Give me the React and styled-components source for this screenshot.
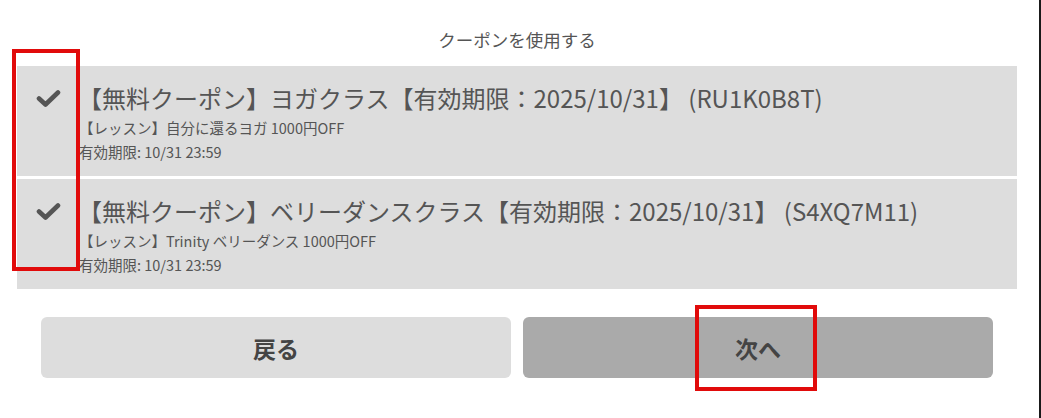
import React from 'react';
import styled, { createGlobalStyle } from 'styled-components';

const GlobalStyle = createGlobalStyle`
  html, body {
    margin: 0;
    padding: 0;
    background: #ffffff;
  }

  body {
    font-family: "Noto Sans CJK JP", "Noto Sans", sans-serif;
    color: #555555;
  }
`;

const Frame = styled.div`
  display: flex;
  width: 1041px;
  height: 418px;
  overflow: hidden;
`;

const Page = styled.div`
  position: relative;
  flex: 1;
  padding: 28px 0 0 17px;
`;

const Edge = styled.div`
  width: 2px;
  background-color: #1a1a1a;
`;

const Panel = styled.div`
  display: flex;
  flex-direction: column;
  width: 1000px;
`;

const Heading = styled.div`
  font-size: 17.5px;
  line-height: 24px;
  text-align: center;
  color: #555555;
  margin-bottom: 14px;
`;

const CouponList = styled.div`
  display: flex;
  flex-direction: column;
  gap: 3px;
`;

const CouponCard = styled.div`
  display: flex;
  background-color: #dddddd;
  height: 110px;
  box-sizing: border-box;
  padding-top: 15px;
`;

const CheckColumn = styled.div`
  display: flex;
  justify-content: center;
  width: 62px;
  padding-top: 9px;
  box-sizing: border-box;
`;

const CouponBody = styled.div`
  display: flex;
  flex-direction: column;
`;

const CouponTitle = styled.div`
  font-size: 24px;
  line-height: 34px;
  color: #555555;
  white-space: nowrap;
  margin-left: -1px;
`;

const CouponLine = styled.div`
  font-size: 14.5px;
  line-height: 24px;
  color: #555555;
  white-space: nowrap;
  margin-top: ${(props) => (props.first ? '1px' : '0')};
`;

const ButtonRow = styled.div`
  display: flex;
  gap: 12px;
  padding: 0 24px;
  margin-top: 28px;
`;

const ActionButton = styled.button`
  flex: 1;
  height: 61px;
  border: none;
  border-radius: 6px;
  background-color: ${(props) => (props.primary ? '#aaaaaa' : '#dddddd')};
  color: #444444;
  font-family: "Noto Sans CJK JP", "Noto Sans", sans-serif;
  font-size: 23px;
  font-weight: 700;
  cursor: pointer;
`;

const Highlight = styled.div`
  position: absolute;
  box-sizing: border-box;
  border: 4.5px solid #e10b0b;
  pointer-events: none;
`;

const CheckMark = () => (
  <svg width="25" height="17" viewBox="0 0 25 17">
    <polyline
      points="3,8.5 9.5,14.5 22,2.5"
      fill="none"
      stroke="#555555"
      strokeWidth="4.6"
      strokeLinecap="round"
      strokeLinejoin="round"
    />
  </svg>
);

const coupons = [
  {
    title: '【無料クーポン】ヨガクラス【有効期限：2025/10/31】 (RU1K0B8T)',
    lesson: '【レッスン】自分に還るヨガ 1000円OFF',
    expiry: '有効期限: 10/31 23:59',
  },
  {
    title: '【無料クーポン】ベリーダンスクラス【有効期限：2025/10/31】 (S4XQ7M11)',
    lesson: '【レッスン】Trinity ベリーダンス 1000円OFF',
    expiry: '有効期限: 10/31 23:59',
  },
];

const App = () => {
  return (
    <>
      <GlobalStyle />
      <Frame>
        <Page>
          <Panel>
            <Heading>クーポンを使用する</Heading>

            <CouponList>
              {coupons.map((coupon) => (
                <CouponCard key={coupon.title}>
                  <CheckColumn>
                    <CheckMark />
                  </CheckColumn>
                  <CouponBody>
                    <CouponTitle>{coupon.title}</CouponTitle>
                    <CouponLine first>{coupon.lesson}</CouponLine>
                    <CouponLine>{coupon.expiry}</CouponLine>
                  </CouponBody>
                </CouponCard>
              ))}
            </CouponList>

            <ButtonRow>
              <ActionButton>戻る</ActionButton>
              <ActionButton primary>次へ</ActionButton>
            </ButtonRow>
          </Panel>

          {/* annotation boxes drawn over the screen */}
          <Highlight style={{ left: 12, top: 49, width: 68, height: 222 }} />
          <Highlight style={{ left: 695, top: 305, width: 122, height: 86 }} />
        </Page>
        <Edge />
      </Frame>
    </>
  );
};

export default App;
